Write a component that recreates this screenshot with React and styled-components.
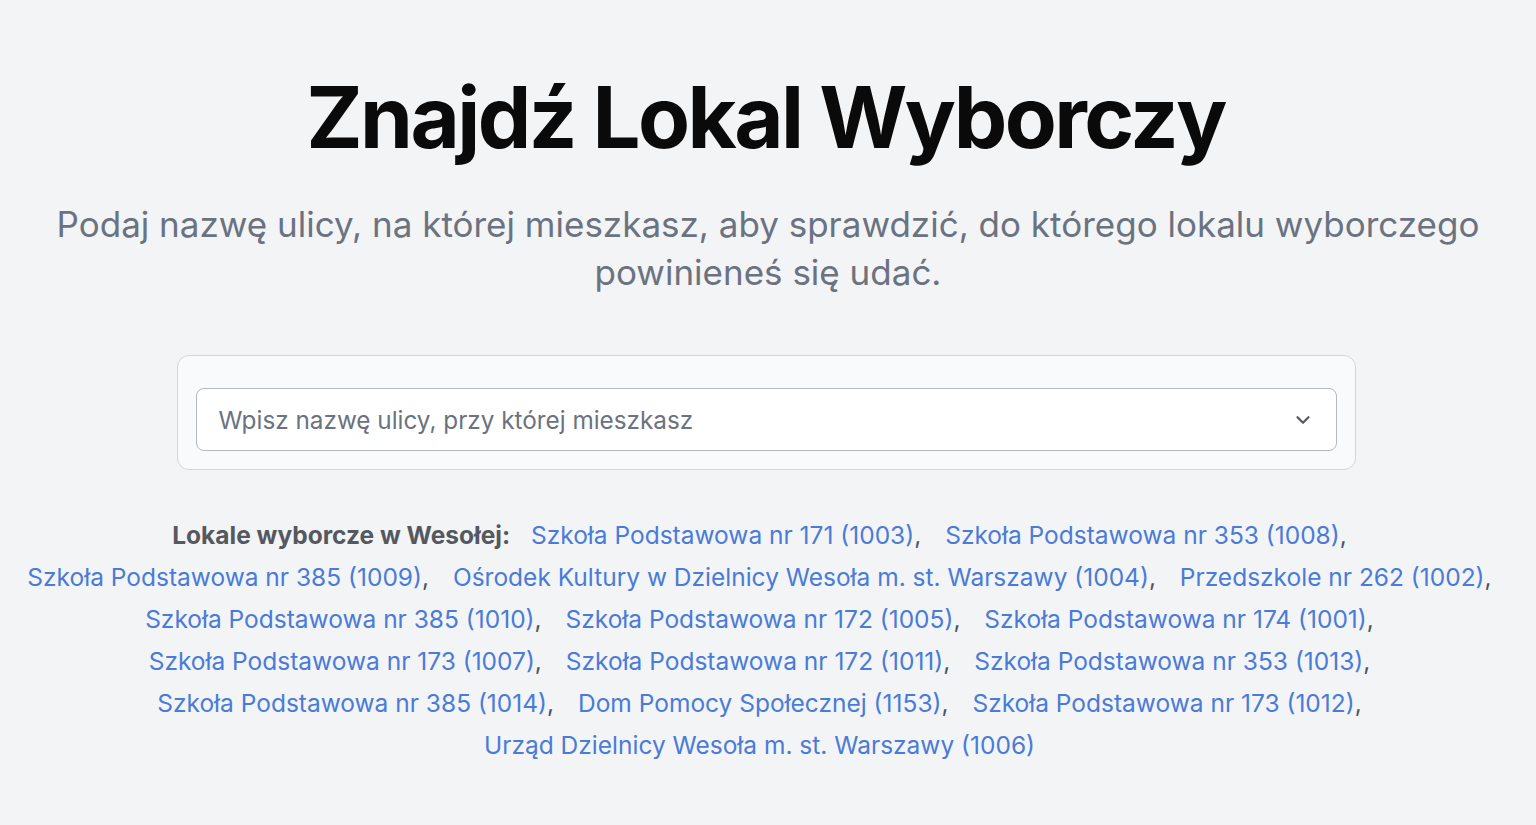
import React from 'react';
import styled, { createGlobalStyle } from 'styled-components';

const GlobalStyle = createGlobalStyle`
  html, body {
    margin: 0;
    padding: 0;
    background: #f3f4f6;
    font-family: Inter, "Noto Sans", sans-serif;
  }
`;

const Page = styled.main`
  display: flex;
  flex-direction: column;
  align-items: center;
  padding: 67px 10px 40px;
`;

const Title = styled.h1`
  margin: 0 0 0 -5px;
  font-size: 85px;
  font-weight: 700;
  letter-spacing: -0.03em;
  line-height: 1.2;
  color: #0a0a0a;
  text-align: center;
`;

const Subtitle = styled.p`
  margin: 31px 0 0;
  font-size: 35px;
  line-height: 48px;
  color: #6b7280;
  text-align: center;
  max-width: 1460px;
`;

const Card = styled.div`
  box-sizing: border-box;
  width: 1179px;
  margin: 59px 0 0 -4px;
  padding: 32px 18px 18px;
  background: #f9fafb;
  border: 1px solid #d4d6da;
  border-radius: 12px;
`;

const Select = styled.div`
  box-sizing: border-box;
  display: flex;
  align-items: center;
  justify-content: space-between;
  height: 63px;
  padding: 0 22px;
  background: #fff;
  border: 1.5px solid #b5b7bb;
  border-radius: 8px;
  font-size: 24.3px;
  color: #6b7280;
`;

const Chevron = styled.svg`
  width: 22px;
  height: 22px;
  color: #55585e;
`;

const Places = styled.p`
  margin: 44px 0 0;
  font-size: 24.5px;
  line-height: 42px;
  text-align: center;
  color: #4b5563;
`;

const Label = styled.strong`
  font-weight: 700;
  color: #55585e;
  margin-right: 14px;
  white-space: nowrap;
`;

const Item = styled.span`
  white-space: nowrap;
  margin-right: 17px;
`;

const Link = styled.a`
  color: #4a7bd8;
  text-decoration: none;
`;

const places = [
  'Szkoła Podstawowa nr 171 (1003)',
  'Szkoła Podstawowa nr 353 (1008)',
  'Szkoła Podstawowa nr 385 (1009)',
  'Ośrodek Kultury w Dzielnicy Wesoła m. st. Warszawy (1004)',
  'Przedszkole nr 262 (1002)',
  'Szkoła Podstawowa nr 385 (1010)',
  'Szkoła Podstawowa nr 172 (1005)',
  'Szkoła Podstawowa nr 174 (1001)',
  'Szkoła Podstawowa nr 173 (1007)',
  'Szkoła Podstawowa nr 172 (1011)',
  'Szkoła Podstawowa nr 353 (1013)',
  'Szkoła Podstawowa nr 385 (1014)',
  'Dom Pomocy Społecznej (1153)',
  'Szkoła Podstawowa nr 173 (1012)',
  'Urząd Dzielnicy Wesoła m. st. Warszawy (1006)',
];

export default function App() {
  return (
    <>
      <GlobalStyle />
      <Page>
        <Title>Znajdź Lokal Wyborczy</Title>
        <Subtitle>
          Podaj nazwę ulicy, na której mieszkasz, aby sprawdzić, do którego lokalu wyborczego powinieneś się udać.
        </Subtitle>
        <Card>
          <Select>
            <span>Wpisz nazwę ulicy, przy której mieszkasz</span>
            <Chevron viewBox="0 0 24 24" fill="none" stroke="currentColor" strokeWidth="2.4" strokeLinecap="round" strokeLinejoin="round">
              <path d="M6 9l6 6 6-6" />
            </Chevron>
          </Select>
        </Card>
        <Places>
          <Label>Lokale wyborcze w Wesołej:</Label>{' '}
          {places.map((p, i) => {
            const last = i === places.length - 1;
            return (
              <React.Fragment key={i}>
                <Item>
                  <Link href="#">{p}</Link>
                  {last ? '' : ','}
                </Item>{' '}
              </React.Fragment>
            );
          })}
        </Places>
      </Page>
    </>
  );
}
